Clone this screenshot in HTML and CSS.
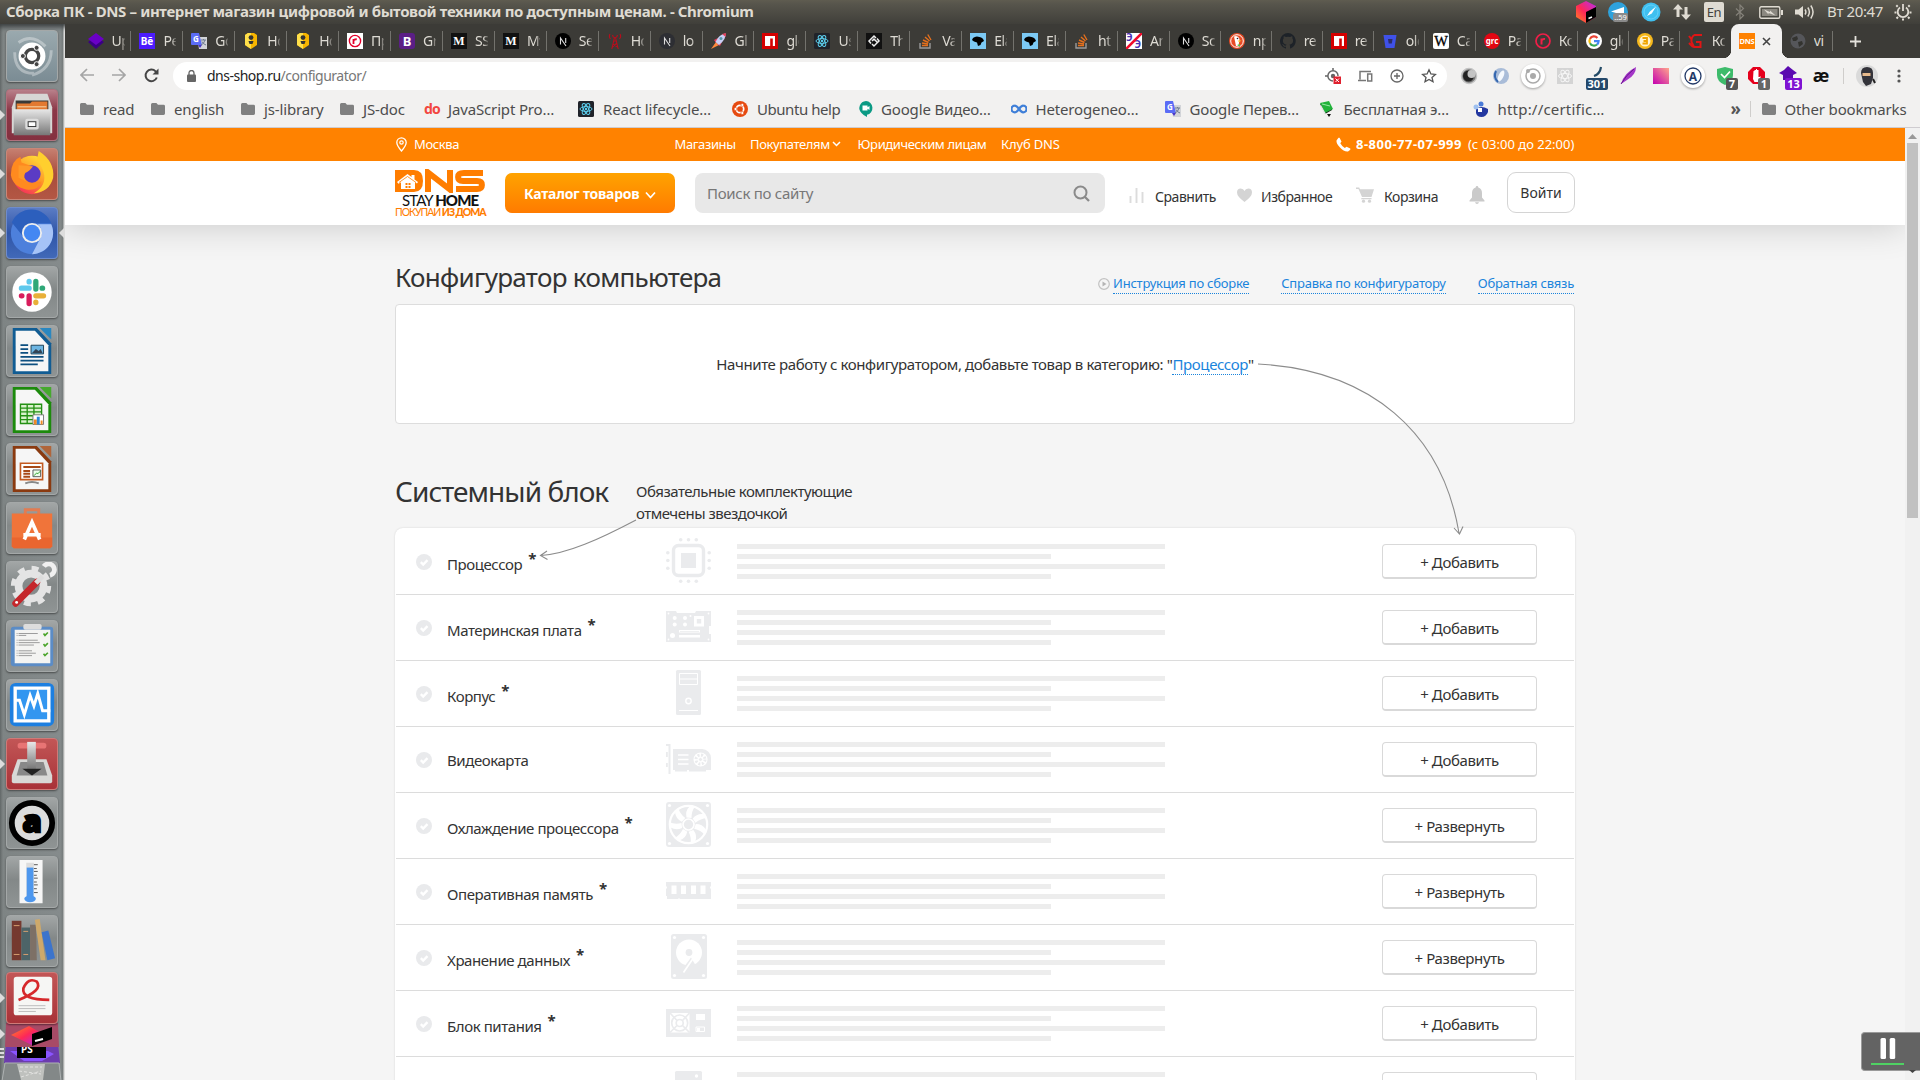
FILE: index.html
```html
<!DOCTYPE html>
<html lang="ru">
<head>
<meta charset="utf-8">
<title>Сборка ПК - DNS</title>
<link rel="stylesheet" href="styles.css">
</head>
<body>
<svg class="defs" aria-hidden="true">
  <defs>
    <linearGradient id="g-slate" x1="0" y1="0" x2="0" y2="1"><stop offset="0" stop-color="#e8e8e8"/><stop offset="1" stop-color="#777"/></linearGradient>
    <linearGradient id="g-fox" x1="0.8" y1="0" x2="0.2" y2="1"><stop offset="0" stop-color="#ffe63c"/><stop offset=".5" stop-color="#ff9a28"/><stop offset="1" stop-color="#f5275f"/></linearGradient>
    <linearGradient id="g-jb" x1="0" y1="0" x2="1" y2="1"><stop offset="0" stop-color="#ff8a1e"/><stop offset=".5" stop-color="#fe2857"/><stop offset="1" stop-color="#a42df5"/></linearGradient>
    <linearGradient id="g-cube" x1="0" y1="1" x2="1" y2="0"><stop offset="0" stop-color="#ff8a1e"/><stop offset=".45" stop-color="#fe2857"/><stop offset="1" stop-color="#b62df5"/></linearGradient>
    <linearGradient id="g-pink" x1="0" y1="1" x2="1" y2="0"><stop offset="0" stop-color="#c400b0"/><stop offset="1" stop-color="#ffa58c"/></linearGradient>
  </defs>
</svg>
<svg class="sprite" aria-hidden="true">
  <symbol id="folder" viewBox="0 0 14 12"><path fill="#808080" d="M0 1.5Q0 0 1.4 0H5.4L7 1.8H12.6Q14 1.8 14 3.2V10.6Q14 12 12.6 12H1.4Q0 12 0 10.6Z"/></symbol>
  <symbol id="t-layers" viewBox="0 0 16 16"><path fill="#3b0085" d="M0 9 8 3.5 16 9 8 16Z"/><path fill="#6a00c8" d="M0 6 8 0 16 6 8 12Z"/></symbol>
  <symbol id="t-be" viewBox="0 0 16 16"><path fill="#4c1bff" d="M0 0h16v16H0z"/><text x="8" y="11.6" text-anchor="middle" font-size="10" font-weight="700" fill="#fff">Bē</text></symbol>
  <symbol id="t-translate" viewBox="0 0 16 16"><path fill="#d2d4d8" d="M6 4h10v12H8z"/><path fill="#5b6cf6" d="M1 0h7l3 12H1Q0 12 0 11V1Q0 0 1 0z"/><path fill="#4a36c8" d="M7 12h4l-2 3z"/><text x="2" y="9" font-size="8" font-weight="700" fill="#fff">G</text><path d="M10 7h5M12.5 6v1M14 7q-1 4-4 5M11 8.500q1 2.500 4 3.500" stroke="#6d7a90" fill="none"/></symbol>
  <symbol id="t-badge" viewBox="0 0 16 16"><path fill="#f7b500" d="M2 2 5 0H11L14 2V12L8 16 2 12Z"/><path fill="#ffdf4a" d="M2 2 5 0H8V16L2 12Z"/><circle cx="8" cy="4.600" r="2.400" fill="#333"/><path fill="#333" d="M5.500 8h5l-1 3h-3z"/></symbol>
  <symbol id="t-redr" viewBox="0 0 16 16"><path fill="#fff" d="M0 0h16v16H0z"/><circle cx="8" cy="8" r="5.600" fill="none" stroke="#e4002b" stroke-width="1.400"/><path d="M6.500 11V6M6.500 7.500Q7.500 6 9.800 6.300" stroke="#e4002b" stroke-width="1.800" fill="none"/></symbol>
  <symbol id="t-bootstrap" viewBox="0 0 16 16"><rect width="16" height="16" rx="3" fill="#5b1e86"/><text x="8" y="13" text-anchor="middle" font-size="13" font-weight="700" fill="#fff">B</text></symbol>
  <symbol id="t-medium" viewBox="0 0 16 16"><path fill="#111" d="M0 0h16v16H0z"/><text x="8" y="12.400" text-anchor="middle" font-size="12" font-weight="700" class="serif" fill="#fff">M</text></symbol>
  <symbol id="t-next" viewBox="0 0 16 16"><circle cx="8" cy="8" r="8" fill="#000"/><path d="M5.500 11.500V5L11 13M10.700 5v5" stroke="#ddd" stroke-width="1.100" fill="none"/></symbol>
  <symbol id="t-nextdim" viewBox="0 0 16 16"><circle cx="8" cy="8" r="8" fill="#2d2e33"/><path d="M5.500 11.500V5L11 13M10.700 5v5" stroke="#ddd" stroke-width="1.100" fill="none"/></symbol>
  <symbol id="t-tower" viewBox="0 0 16 16"><path d="M7.600 4 4.800 16M8.400 4l2.800 12M5.800 11 10.500 14M10 10 5.500 14M6.500 8h3M3 1Q1.500 3.500 3.500 6M13 1Q14.500 3.500 12.500 6M5.500 2 6.500 4.500M10.500 2 9.500 4.500" stroke="#b90d1c" stroke-width="1.100" fill="none"/></symbol>
  <symbol id="t-rocket" viewBox="0 0 16 16"><path fill="#ff8a3c" d="M0 16 5 9l3 3z"/><path fill="#e2405c" d="M3 7 7 5 5 10zM11 9 9 13 6 11z"/><path fill="#c9cff5" d="M14.500.500Q15.500 6 8 12L4.500 9Q8 1 14.500.500z"/><path fill="#e2405c" d="M15 0 14.700 4 11 1Z"/><circle cx="10" cy="5.500" r="1.500" fill="#59a"/></symbol>
  <symbol id="t-npm" viewBox="0 0 16 16"><path fill="#d40000" d="M0 0h16v16H0z"/><path fill="#fff" d="M3 3h10v10h-2.200V5.500H8.200V13H3z"/></symbol>
  <symbol id="t-react" viewBox="0 0 16 16"><rect width="16" height="16" rx="1.500" fill="#20232a"/><g fill="none" stroke="#5ccfee"><ellipse cx="8" cy="8" rx="6" ry="2.400"/><ellipse cx="8" cy="8" rx="6" ry="2.400" transform="rotate(60 8 8)"/><ellipse cx="8" cy="8" rx="6" ry="2.400" transform="rotate(120 8 8)"/></g><circle cx="8" cy="8" r="1.200" fill="#5ccfee"/></symbol>
  <symbol id="t-diamond" viewBox="0 0 16 16"><path fill="#111" d="M0 0h16v16H0z"/><path d="M5 10.500 3 8 8 3l2 2M11 5.500 13 8 8 13 6 11M6 8 8 6l3 3" stroke="#eee" stroke-width="1.500" fill="none"/></symbol>
  <symbol id="t-stack" viewBox="0 0 16 16"><path d="M2 10v5h10v-5" stroke="#9a9a9a" stroke-width="1.400" fill="none"/><path d="M4 12.500h6M4 10l6 1M5 7l5.500 2.500M7 4l4.500 4M9.800 1.500 13 7" stroke="#e6701d" stroke-width="1.400" fill="none"/></symbol>
  <symbol id="t-elastic" viewBox="0 0 16 16"><path fill="#7cc9f4" d="M0 0h16v16H0z"/><path fill="#000" d="M3 5Q6 2.500 9.500 4 13 4.500 14 8L11.500 9.500 10.500 12 8 13 7 9.500 4 8.500 2 7z"/></symbol>
  <symbol id="t-noe" viewBox="0 0 16 16"><path fill="#fff" d="M0 0h16v16H0z"/><text x="0" y="7.500" font-size="10" font-weight="700" fill="#4a2fb5">Э</text><text x="8.500" y="15" font-size="10" font-weight="700" fill="#4a2fb5">Э</text><path d="M0 16 16 0" stroke="#f10b2b" stroke-width="2.600"/></symbol>
  <symbol id="t-duck" viewBox="0 0 16 16"><circle cx="8" cy="8" r="8" fill="#e84a24"/><circle cx="8" cy="8" r="6.300" fill="#e84a24" stroke="#fff"/><path fill="#fff" d="M5 3.500Q9 2 10.500 6L9.500 13.500 7 13z"/><path fill="#fecb2e" d="M8.500 7.500h4L10 9.300z"/><circle cx="8.500" cy="5.500" r=".8" fill="#223"/><path fill="#56b949" d="M8 12l3-1v3z"/></symbol>
  <symbol id="t-github" viewBox="0 0 16 16"><path fill="#1d2228" d="M8 0a8 8 0 0 0-2.500 15.600c.4 0 .5-.2.500-.4v-1.500c-2.200.5-2.700-1-2.700-1-.4-.9-.9-1.200-.9-1.200-.7-.5.1-.5.100-.5.800.1 1.200.8 1.200.8.700 1.200 1.900.9 2.300.7.100-.5.300-.9.500-1.100-1.800-.2-3.600-.9-3.600-4 0-.9.300-1.600.8-2.100-.1-.2-.4-1 .1-2.100 0 0 .7-.2 2.200.8a7.500 7.500 0 0 1 4 0c1.500-1 2.200-.8 2.200-.8.400 1.100.2 1.900.1 2.100.5.500.8 1.200.8 2.100 0 3.100-1.900 3.800-3.700 4 .3.300.600.700.600 1.500v2.200c0 .2.100.5.500.4A8 8 0 0 0 8 0z"/></symbol>
  <symbol id="t-bit" viewBox="0 0 16 16"><path fill="#3f51e8" d="M1.500 2h13L12.500 15h-9z"/><path fill="#2b2d6b" d="M6 6h4.500l-.7 4.500H6.700z"/></symbol>
  <symbol id="t-wiki" viewBox="0 0 16 16"><rect width="16" height="16" rx="2" fill="#fff"/><text x="8" y="12.800" text-anchor="middle" font-size="14.500" class="serif" fill="#000" stroke="#000" stroke-width=".3">W</text></symbol>
  <symbol id="t-grc" viewBox="0 0 16 16"><circle cx="8" cy="8" r="8" fill="#e20613"/><text x="8" y="10.500" text-anchor="middle" font-size="8" font-weight="700" fill="#fff">grc</text></symbol>
  <symbol id="t-ring" viewBox="0 0 16 16"><circle cx="8" cy="8" r="7" fill="none" stroke="#f01e48" stroke-width="1.700"/><path d="M6.500 11.500V5.500M6.500 7.500Q7.500 5.500 10 6" stroke="#f01e48" stroke-width="2" fill="none"/></symbol>
  <symbol id="t-google" viewBox="0 0 16 16"><circle cx="8" cy="8" r="8" fill="#fff"/><g fill="none" stroke-width="2.200"><path stroke="#ea4335" d="M3.900 5.900A4.600 4.600 0 0 1 11.400 4.900"/><path stroke="#fbbc05" d="M3.900 5.900A4.600 4.600 0 0 0 4 10.200"/><path stroke="#34a853" d="M4 10.200A4.600 4.600 0 0 0 11 11.500"/><path stroke="#4285f4" d="M11 11.500A4.600 4.600 0 0 0 12.600 8.200H8"/></g></symbol>
  <symbol id="t-coin" viewBox="0 0 16 16"><circle cx="8" cy="8" r="8" fill="#f6b81c"/><circle cx="8" cy="8" r="5.500" fill="#fff3cf"/><path d="M5.500 5h4.500v5.500H5.500M6.500 8h4" stroke="#f0a400" stroke-width="1.800" fill="none"/></symbol>
  <symbol id="t-g" viewBox="0 0 16 16"><path d="M14 2H6.500Q3 4 3.500 9L6 14h6.500V9H8M1 3l3 4M1 10l4 4" stroke="#e01515" stroke-width="2" fill="none"/></symbol>
  <symbol id="t-dns" viewBox="0 0 16 16"><path fill="#ff8200" d="M0 0h16v16H0z"/><text x="8" y="10.800" text-anchor="middle" font-size="7.500" font-weight="700" letter-spacing="-.3" fill="#fff">DNS</text></symbol>
  <symbol id="t-globe" viewBox="0 0 16 16"><circle cx="8" cy="8" r="7.500" fill="#55565a"/><path fill="#33332f" d="M2 5l5-2 1 3-2 2-3 0zM8 9l4-1 1 3-4 3z"/></symbol>

  <symbol id="check" viewBox="0 0 16 16"><circle cx="8" cy="8" r="8" fill="#e9eaec"/><path d="M4.800 8.200 7.200 10.500 11.500 6.200" stroke="#fff" stroke-width="2.400" fill="none"/></symbol>
  <symbol id="p-cpu" viewBox="0 0 45 45"><rect x="7.500" y="7.500" width="30" height="30" rx="5" fill="none" stroke="#eaebed" stroke-width="3.400"/><path fill="#eaebed" d="M15 15h15v15H15z"/><g fill="#eaebed"><circle cx="14.700" cy="1.800" r="1.800"/><circle cx="22.500" cy="1.800" r="1.800"/><circle cx="30.300" cy="1.800" r="1.800"/><circle cx="14.700" cy="43.200" r="1.800"/><circle cx="22.500" cy="43.200" r="1.800"/><circle cx="30.300" cy="43.200" r="1.800"/><circle cx="1.800" cy="14.700" r="1.800"/><circle cx="1.800" cy="22.500" r="1.800"/><circle cx="1.800" cy="30.300" r="1.800"/><circle cx="43.200" cy="14.700" r="1.800"/><circle cx="43.200" cy="22.500" r="1.800"/><circle cx="43.200" cy="30.300" r="1.800"/></g></symbol>
  <symbol id="p-board" viewBox="0 0 45 45"><path fill="#eaebed" d="M0 7h10l1 2h18l1-2h15v15h-2v8h2v8H0z"/><g fill="#fff"><circle cx="8.700" cy="14" r="2"/><circle cx="8.700" cy="20.500" r="2"/><circle cx="19" cy="14" r="2"/><circle cx="19" cy="20.500" r="2"/><circle cx="24.500" cy="12" r="1"/><path d="M28 12h10v10.500H28z"/><circle cx="6.500" cy="31.500" r="2.500"/><path d="M13 26h21v2.600H13zM13 31h21v2.600H13z"/><circle cx="2.500" cy="9.500" r=".9"/><circle cx="42.500" cy="9.500" r=".9"/><circle cx="2.500" cy="35.500" r=".9"/><circle cx="42.500" cy="35.500" r=".9"/></g><path fill="#eaebed" d="M30.800 15h4.400v4.500h-4.400zM14 27h19v.700H14z"/></symbol>
  <symbol id="p-case" viewBox="0 0 45 45"><rect x="10" width="25" height="45" rx="1.500" fill="#eaebed"/><g fill="none" stroke="#fff"><path d="M13.500 3.500h18v11h-18zM13.500 9h18M13 40.500h19"/><circle cx="22.500" cy="31" r="2.700" stroke-width="1.400"/></g></symbol>
  <symbol id="p-gpu" viewBox="0 0 45 45"><path fill="#eaebed" d="M0 8h4.500v30H2.500V10H0zM0 16h1.800v5H0zM0 27h1.800v4H0zM7 13h29a9 9 0 0 1 9 9v12h-5v1.500H23V34h-2v1.500H9V34H7z"/><path d="M12 19h10.500M12 23.500h10.500M12 28h10.500" stroke="#fff" stroke-width="1.500"/><circle cx="34.500" cy="23.500" r="7" fill="#fff"/><circle cx="34.500" cy="23.500" r="4.500" fill="none" stroke="#eaebed" stroke-width="3" stroke-dasharray="2 1.530"/><circle cx="34.500" cy="23.500" r="2" fill="#eaebed" stroke="#fff"/></symbol>
  <symbol id="p-fan" viewBox="0 0 45 45"><rect width="45" height="45" rx="3" fill="#eaebed"/><g fill="#fff"><circle cx="3.500" cy="3.500" r="1.600"/><circle cx="41.500" cy="3.500" r="1.600"/><circle cx="3.500" cy="41.500" r="1.600"/><circle cx="41.500" cy="41.500" r="1.600"/></g><circle cx="22.500" cy="22.500" r="18.700" fill="none" stroke="#fff" stroke-width="2.200"/><g fill="#fff"><path id="blade" d="M20.500 15.500Q19 9 23.500 4.500H29Q25.500 9 25.500 16Z"/><use href="#blade" transform="rotate(51.400 22.500 22.500)"/><use href="#blade" transform="rotate(102.800 22.500 22.500)"/><use href="#blade" transform="rotate(154.200 22.500 22.500)"/><use href="#blade" transform="rotate(205.700 22.500 22.500)"/><use href="#blade" transform="rotate(257.100 22.500 22.500)"/><use href="#blade" transform="rotate(308.500 22.500 22.500)"/></g><circle cx="22.500" cy="22.500" r="6.500" fill="#eaebed"/><circle cx="22.500" cy="22.500" r="5.500" fill="#eaebed" stroke="#fff" stroke-width="1.700"/></symbol>
  <symbol id="p-ram" viewBox="0 0 45 45"><path fill="#eaebed" d="M0 14h45v4q-2 1.500 0 3v10H14l-1-1-1 1H1v-3H0v-7q2-1.500 0-3z"/><path fill="#fff" d="M5.500 17.500h5v8.500h-5zM15 17.500h5v8.500h-5zM25 17.500h5v8.500h-5zM34.500 17.500h5v8.500h-5z"/></symbol>
  <symbol id="p-hdd" viewBox="0 0 45 45"><rect x="5" width="36" height="45" rx="2.500" fill="#eaebed"/><g fill="#fff"><circle cx="8.500" cy="3.500" r="1.600"/><circle cx="37.500" cy="3.500" r="1.600"/><circle cx="8.500" cy="41.500" r="1.600"/><circle cx="37.500" cy="41.500" r="1.600"/><circle cx="23" cy="18.500" r="13"/></g><path fill="#eaebed" d="M18 33 25 23.500 30 32z"/><path d="M17.500 38.500 27 24.500" stroke="#fff" stroke-width="1.700"/><circle cx="23" cy="18.500" r="3.400" fill="#eaebed"/></symbol>
  <symbol id="p-psu" viewBox="0 0 45 45"><path fill="#eaebed" d="M0 9h45v28H0z"/><path fill="#fff" d="M4 13h19.500v19.500H4zM30 14h9v6h-9z"/><g fill="none" stroke="#eaebed" stroke-width="1.700"><circle cx="13.700" cy="23" r="3.500"/><circle cx="13.700" cy="23" r="8"/><path d="M4 13l7 7.500M23.500 13l-7 7.500M4 32.500l7-7M23.500 32.500l-7-7"/></g><path d="M30 27h8.500v4.500H30z" fill="none" stroke="#fff"/><path fill="#fff" d="M31 28h3v3h-3z"/></symbol>
  <symbol id="p-reader" viewBox="0 0 45 45"><rect x="9" y="5" width="27" height="45" rx="1.500" fill="#eaebed"/><circle cx="30.500" cy="10" r="1.700" fill="#fff"/></symbol>
</svg>

<header class="panel">
  <span class="panel-title">Сборка ПК - DNS – интернет магазин цифровой и бытовой техники по доступным ценам. - Chromium</span>
  <div class="tray">
    <svg width="20" height="22" viewBox="0 0 20 22"><path fill="url(#g-cube)" d="M10 0 20 5v11l-10 6L0 16V5z"/><path fill="#000" d="M10 11 20 6v10l-10 6z"/><path d="M12.500 17.500l3.500-1.500" stroke="#fff" stroke-width="1.500"/></svg>
    <svg width="20" height="20" viewBox="0 0 20 20"><circle cx="10" cy="10" r="10" fill="#2ea2dc"/><path fill="#fff" d="M3 9.500 16 5v7L8 11z"/><rect x="5" y="11" width="15" height="9" rx="2" fill="#8a8a8a"/><text x="12.500" y="18" text-anchor="middle" font-size="7.500" fill="#fff">..59</text></svg>
    <svg width="20" height="20" viewBox="0 0 20 20"><circle cx="10" cy="10" r="9.500" fill="#3fc0f0"/><circle cx="10" cy="10" r="7" fill="none" stroke="#65d2fa"/><path fill="#fff" d="M15 4.500 10.800 11.500 8.700 9.800zM10.800 11.500 8.700 9.800 6 14z"/></svg>
    <svg width="18" height="18" viewBox="0 0 18 18"><path fill="#dfdbd2" d="M5 1 10 6.500H6.500V14h-3V6.500H0zM13 17 8 11.500h3.500V4h3v7.500H18z"/></svg>
    <span class="lang">En</span>
    <svg width="10" height="16" viewBox="0 0 10 16"><path d="M1 4.500 8.500 11.500 5 15V1l3.500 3.500L1 11.500" fill="none" stroke="#85827a" stroke-width="1.200"/></svg>
    <svg width="24" height="13" viewBox="0 0 24 13"><rect x=".8" y=".8" width="20" height="11.400" rx="1.500" fill="none" stroke="#dfdbd2" stroke-width="1.400"/><path fill="#8b8880" d="M3 3h15.500v7H3z"/><path fill="#dfdbd2" d="M22 4h2v5h-2zM5 3.500l6 2.500V4.500l5.500 5-7-2.500v1.500z"/></svg>
    <svg width="20" height="16" viewBox="0 0 20 16"><path fill="#dfdbd2" d="M0 5.500h3.500L8 2v12L3.500 10.500H0z"/><path d="M10 5.500q1.800 2.500 0 5M12.800 3.500q3.200 4.500 0 9M15.800 1.500q4.500 6.500 0 13" fill="none" stroke="#dfdbd2" stroke-width="1.500"/></svg>
    <span class="clock">Вт 20:47</span>
    <svg width="18" height="18" viewBox="0 0 18 18"><path d="M6 4.500a5.300 5.300 0 1 0 6 0M9 1v7" fill="none" stroke="#dfdbd2" stroke-width="1.800"/><path d="M3.700 3.700 2.300 2.300M2.500 9.500H.5M17.500 9.500h-2M4 14l-1.500 1.500M9 15.500v2M14 14l1.500 1.500M14.300 3.700l1.400-1.400" stroke="#dfdbd2" stroke-width="2"/></svg>
  </div>
</header>

<div class="desktop">
  <nav class="launcher">
    <div class="app slate"><svg viewBox="0 0 52 52"><path d="M12 12Q26 2 40 16M46 20Q46 40 26 46M8 22Q8 44 28 44" fill="none" stroke="#fff" stroke-opacity=".35" stroke-width="3"/><circle cx="26" cy="26" r="14" fill="#fff"/><circle cx="26" cy="26" r="7" fill="none" stroke="#444" stroke-width="3.400"/><g fill="#444" stroke="#fff"><circle cx="16.500" cy="26" r="2.600"/><circle cx="30.800" cy="17.500" r="2.600"/><circle cx="30.800" cy="34.500" r="2.600"/></g></svg></div>
    <div class="app wine run"><svg viewBox="0 0 52 52"><path fill="#d7d7d5" d="M10 4h32l5 14v27H5V18z"/><path fill="#3a3a38" d="M9 11h34v10H9z"/><path fill="#e27930" d="M10 14h14l2-2h16v9H10z"/><path stroke="#f8dcb0" d="M11 17.500h30"/><path fill="url(#g-slate)" d="M7 20h38v27H7z"/><rect x="19" y="30" width="14" height="11" rx="2" fill="#ddd"/><rect x="22" y="33" width="8" height="5" fill="#fff" stroke="#333"/></svg></div>
    <div class="app brick run"><svg viewBox="0 0 52 52"><circle cx="26" cy="27" r="20" fill="url(#g-fox)"/><path fill="#ffcf2e" d="M33 2Q50 13 48 30 44 45 28 46 42 38 38 24 35 15 31 12z"/><path fill="#ff8a1f" d="M4 27Q4 12 14 8L15 14 26 18 21 24Q17 30 24 35L36 34Q32 44 20 42 6 39 4 27z"/><circle cx="26" cy="26" r="9" fill="#5b3bc4"/><path fill="#ff9a28" d="M12 17 27 18Q24 23 19 25 16 30 21 34L12 30z"/></svg></div>
    <div class="app navy run focus"><svg viewBox="0 0 52 52"><circle cx="26" cy="26" r="22" fill="#4d80dc"/><path fill="#2c5fbd" d="M5 15A22 22 0 0 1 46 16H26L17 30z"/><path fill="#a6c3f7" d="M46 17A22 22 0 0 1 26 48L35 31Q38 21 32 17z"/><circle cx="26" cy="26" r="10.500" fill="#eee"/><circle cx="26" cy="26" r="8.500" fill="#4487f2"/></svg></div>
    <div class="app"><svg viewBox="0 0 52 52"><circle cx="26" cy="26" r="20.500" fill="#fff"/><g stroke-linecap="round" stroke-width="5.500"><path stroke="#5ec8ec" d="M15 22h8M23 15v.5"/><path stroke="#2fa878" d="M30 15v8M37 22h-.5"/><path stroke="#e8b03a" d="M30 30h8M30 37v-.5"/><path stroke="#d81d5c" d="M23 30v8M15 30h.5"/></g></svg></div>
    <div class="app"><svg viewBox="0 0 52 52"><path fill="#115c93" d="M6 2h25l15 16v32H6z"/><path fill="#2a87c0" d="M34 2h12v12z"/><path fill="#f6f6f6" d="M9 5h20l14 15v27H9z"/><path d="M14 20h8M14 24h8M14 28h8M14 32h24M14 36h24M14 40h18" stroke="#0d4f80" stroke-width="1.800"/><path fill="#6cb5e2" stroke="#1c4156" d="M25 20h13v9H25z"/><path fill="#345" d="M26 28l4-4 3 2 2-2 2 4z"/></svg></div>
    <div class="app"><svg viewBox="0 0 52 52"><path fill="#1c8a0c" d="M6 2h25l15 16v32H6z"/><path fill="#46a92e" d="M34 2h12v12z"/><path fill="#f6f6f6" d="M9 5h20l14 15v27H9z"/><path fill="#d9f2cc" stroke="#239013" stroke-width="1.400" d="M14 20h22v20H14zM14 24h22M14 28h22M14 32h22M14 36h22M21 20v20M28 20v20"/><path fill="#fff" stroke="#777" d="M27 31h11v10H27z"/><path fill="#f08a24" d="M28 36h3v5h-3zM35 37h2v4h-2z"/><path fill="#2a86d8" d="M31 33h3v8h-3z"/></svg></div>
    <div class="app"><svg viewBox="0 0 52 52"><path fill="#8a3a10" d="M6 2h25l15 16v32H6z"/><path fill="#b0653a" d="M34 2h12v12z"/><path fill="#f6f6f6" d="M9 5h20l14 15v27H9z"/><path fill="#fff" stroke="#c45a20" stroke-width="1.700" d="M14 20h23v17H14z"/><path d="M17 24h18M17 28h7M17 31h7M17 34h7" stroke="#a84a18" stroke-width="2"/><path fill="#eaffea" stroke="#555" d="M27 27h8v7h-8z"/><path d="M28 33l3-3 1 1 3-3" fill="none" stroke="#2b9a2b"/><path d="M19 41q7-3 14 0" fill="none" stroke="#888" stroke-width="2"/></svg></div>
    <div class="app"><svg viewBox="0 0 52 52"><path d="M19 14V7h14v7" fill="none" stroke="#e27c52" stroke-width="3"/><path fill="#f0743a" d="M5 11h42v34l-2 2H7l-2-2z"/><path fill="#e9652f" d="M5 36h42v9l-2 2H7l-2-2z"/><path d="M18 38 26 20l8 18M17 33h18" fill="none" stroke="#fff" stroke-width="3.800"/></svg></div>
    <div class="app"><svg viewBox="0 0 52 52"><circle cx="25" cy="25" r="13" fill="none" stroke="#e4e4e4" stroke-width="8"/><circle cx="25" cy="25" r="18" fill="none" stroke="#e4e4e4" stroke-width="6" stroke-dasharray="7 7.140"/><path d="M9 43 31 21" stroke="#c5262b" stroke-width="7" stroke-linecap="round"/><path d="M30 22l7-7" stroke="#ddd" stroke-width="5"/><path d="M33 13a6 6 0 1 0 11 2" fill="none" stroke="#f0f0f0" stroke-width="5" transform="rotate(-135 39 11)"/><circle cx="10" cy="42" r="1.500" fill="#fff"/></svg></div>
    <div class="app"><svg viewBox="0 0 52 52"><rect x="4" y="6" width="44" height="41" rx="3" fill="#5b8cc6"/><path fill="#f4f4f2" d="M8 9h37v35H8z"/><rect x="17" y="3" width="19" height="6" rx="2" fill="#ddd"/><path d="M10 13h22M10 15h10M10 20h22M10 22.500h24M10 25h18M10 31h16M10 33.500h20M10 36h16" stroke="#999" stroke-dasharray="1 1 40 0"/><path d="M38 13l1.500 2 3-3M38 24l1.500 2 3-3M38 34l1.500 2 3-3" fill="none" stroke="#4aa52a" stroke-width="1.700"/></svg></div>
    <div class="app"><svg viewBox="0 0 52 52"><rect x="3" y="3" width="46" height="45" rx="6" fill="#1d7fe0"/><path fill="#3296f0" stroke="#fff" stroke-width="3.500" d="M8.500 8.500h35v34h-35z"/><path d="M9 21h4l5 15 6-20 4 11 4-13 5 18h8" fill="none" stroke="#fff" stroke-width="3"/></svg></div>
    <div class="app red run"><svg viewBox="0 0 52 52"><rect x="11" y="4" width="30" height="6" rx="3" fill="#e87474"/><path fill="#d8d8d6" d="M11 21h30l6 17v6q0 2-2 2H7q-2 0-2-2v-6z"/><path fill="#888" d="M14 24h24l4 14H10z"/><path fill="url(#g-slate)" d="M21 3h9v28h-9z"/><path fill="#222" d="M16 31h20L26 38z"/></svg></div>
    <div class="app"><svg viewBox="0 0 52 52"><circle cx="26" cy="26" r="21" fill="#dcdcdc" stroke="#000" stroke-width="6"/><text x="26" y="35" text-anchor="middle" font-size="32" font-weight="900" fill="#000" stroke="#000" stroke-width="2.500">a</text></svg></div>
    <div class="app"><svg viewBox="0 0 52 52"><path fill="#f6f6f6" d="M13 3h24v45H13z"/><path d="M24 6v35" stroke="#ddd" stroke-width="8"/><path d="M24 11v31" stroke="#4d97ee" stroke-width="7"/><ellipse cx="24" cy="43.500" rx="6" ry="3.500" fill="#4d97ee"/><path d="M28 8h4M28 12h3M28 15h4M28 19h3M28 22h4M28 26h3M28 29h4M28 33h3M28 37h4" stroke="#555"/></svg></div>
    <div class="app"><svg viewBox="0 0 52 52"><path fill="#75392f" d="M5 5h10v41H5z"/><path fill="#4d6468" d="M15 12h9v34h-9z"/><path fill="#7d7066" d="M24 9h6l1 37h-7z"/><path fill="#cfa96a" d="M29 4l5-1 6 43h-5z"/><path fill="#3c74cc" d="M36 17l7-2 7 29-8 2z"/><path d="M7 10h6M7 40h6M17 16h5M17 40h5" stroke="#d8a070"/></svg></div>
    <div class="app red run doc"><svg viewBox="0 0 52 52"><rect x="7" y="4" width="40" height="40" rx="3" fill="#f6f6f4"/><path d="M12 28Q38 18 31 9 22 4 17 16 15 28 44 28" fill="none" stroke="#d6282b" stroke-width="2.800"/><path d="M12 34h28M12 37h28M12 40h18" stroke="#bbb"/></svg></div>
    <div class="stack">
      <svg viewBox="0 0 64 57" width="64" height="57"><path fill="#6c3cae" d="M6 20h52l2 20H4z"/><path fill="#8a54ff" d="M10 28h38l6 3-12 7H24z"/><path fill="#000" d="M17 23h29v12H17z"/><text x="21" y="30" font-size="10" font-weight="700" fill="#fff">PS</text><path fill="#a84a66" d="M6 0h52l1 24H5z"/><path fill="url(#g-jb)" d="M11 12 29 3l12 7-9 12z"/><path fill="#000" d="M32 11 52 4v12l-20 7z"/><path d="M35 18l8-2" stroke="#fff" stroke-width="2"/><path fill="#838888" stroke="#aeb2b2" d="M5 40h54l2 18H2z"/><path fill="#bfc1be" d="M17 41h28l-2 16H21z"/><path d="M20 44h22M19 48l22 3M21 54l20-6" stroke="#e2e2e0" stroke-dasharray="3 2"/><path fill="#ddd" d="M0 6 5 11 0 16zM0 25h4v2H0zM0 29h4v2H0zM0 33h4v2H0z"/></svg>
    </div>
  </nav>

  <div class="browser">
    <div class="tabs">
      <div class="tab"><svg><use href="#t-layers"/></svg><span>Upw</span></div>
      <div class="tab"><svg><use href="#t-be"/></svg><span>Per</span></div>
      <div class="tab"><svg><use href="#t-translate"/></svg><span>Goo</span></div>
      <div class="tab"><svg><use href="#t-badge"/></svg><span>Но</span></div>
      <div class="tab"><svg><use href="#t-badge"/></svg><span>Но</span></div>
      <div class="tab"><svg><use href="#t-redr"/></svg><span>Про</span></div>
      <div class="tab"><svg><use href="#t-bootstrap"/></svg><span>Grid</span></div>
      <div class="tab"><svg><use href="#t-medium"/></svg><span>SSR</span></div>
      <div class="tab"><svg><use href="#t-medium"/></svg><span>My</span></div>
      <div class="tab"><svg><use href="#t-next"/></svg><span>Ser</span></div>
      <div class="tab"><svg><use href="#t-tower"/></svg><span>Но</span></div>
      <div class="tab"><svg><use href="#t-nextdim"/></svg><span>lo</span></div>
      <div class="tab"><svg><use href="#t-rocket"/></svg><span>Glo</span></div>
      <div class="tab"><svg><use href="#t-npm"/></svg><span>glo</span></div>
      <div class="tab"><svg><use href="#t-react"/></svg><span>Usi</span></div>
      <div class="tab"><svg><use href="#t-diamond"/></svg><span>The</span></div>
      <div class="tab"><svg><use href="#t-stack"/></svg><span>Var</span></div>
      <div class="tab"><svg><use href="#t-elastic"/></svg><span>Ela</span></div>
      <div class="tab"><svg><use href="#t-elastic"/></svg><span>Ela</span></div>
      <div class="tab"><svg><use href="#t-stack"/></svg><span>htm</span></div>
      <div class="tab"><svg><use href="#t-noe"/></svg><span>An</span></div>
      <div class="tab narrow"><svg><use href="#t-next"/></svg><span>Sco</span></div>
      <div class="tab narrow"><svg><use href="#t-duck"/></svg><span>npm</span></div>
      <div class="tab narrow"><svg><use href="#t-github"/></svg><span>rea</span></div>
      <div class="tab narrow"><svg><use href="#t-npm"/></svg><span>rea</span></div>
      <div class="tab narrow"><svg><use href="#t-bit"/></svg><span>old</span></div>
      <div class="tab narrow"><svg><use href="#t-wiki"/></svg><span>Car</span></div>
      <div class="tab narrow"><svg><use href="#t-grc"/></svg><span>Pac</span></div>
      <div class="tab narrow"><svg><use href="#t-ring"/></svg><span>Ко</span></div>
      <div class="tab narrow"><svg><use href="#t-google"/></svg><span>glo</span></div>
      <div class="tab narrow"><svg><use href="#t-coin"/></svg><span>Pac</span></div>
      <div class="tab narrow last"><svg><use href="#t-g"/></svg><span>Ко</span></div>
      <div class="tab narrow active"><svg><use href="#t-dns"/></svg><svg class="close" viewBox="0 0 9 9"><path d="M1 1l7 7M8 1 1 8" stroke="#444" stroke-width="1.600"/></svg></div>
      <div class="tab narrow"><svg><use href="#t-globe"/></svg><span>vi</span></div>
      <svg class="plus" viewBox="0 0 13 13"><path d="M6.500 1v11M1 6.500h11" stroke="#e4e2dc" stroke-width="1.800"/></svg>
    </div>

    <div class="toolbar">
      <div class="nav-buttons">
        <svg width="14" height="14" viewBox="0 0 14 14"><path d="M7 1 1 7l6 6M1 7h13" fill="none" stroke="#a5a5a5" stroke-width="1.700"/></svg>
        <svg width="14" height="14" viewBox="0 0 14 14"><path d="M7 1l6 6-6 6M13 7H0" fill="none" stroke="#a5a5a5" stroke-width="1.700"/></svg>
        <svg width="15" height="15" viewBox="0 0 15 15"><path d="M12.800 9.500A5.800 5.800 0 1 1 11.600 3.400L13 5" fill="none" stroke="#454545" stroke-width="2"/><path fill="#454545" d="M14.500.500V6.500H8.500z"/></svg>
      </div>
      <div class="omnibox">
        <svg width="9" height="12" viewBox="0 0 9 12"><rect y="4.500" width="9" height="7.500" rx="1" fill="#666"/><path d="M2 5V3a2.500 2.500 0 0 1 5 0v2" fill="none" stroke="#666" stroke-width="1.300"/></svg>
        <span class="url"><b>dns-shop.ru</b>/configurator/</span>
        <div class="omni-actions">
          <svg width="16" height="16" viewBox="0 0 16 16"><path d="M8 2.800A5 5 0 1 0 8 13M8 2.800A5 5 0 0 1 13 8M8 0v3M0 8h3" fill="none" stroke="#666" stroke-width="1.500"/><circle cx="8" cy="8" r="2.200" fill="#666"/><path fill="#e0202e" d="M8.500 8.500H16V16H8.500z"/><path d="M10.500 10.500l3.500 3.500M14 10.500 10.500 14" stroke="#fff"/></svg>
          <svg width="16" height="16" viewBox="0 0 16 16"><path d="M3 11.500V3.500h11M1 12.500h8M10.700 6h4v7h-4z" fill="none" stroke="#777" stroke-width="1.500"/></svg>
          <svg width="16" height="16" viewBox="0 0 16 16"><circle cx="8" cy="8" r="6" fill="none" stroke="#666" stroke-width="1.300"/><path d="M8 5v6M5 8h6" stroke="#666" stroke-width="1.300"/></svg>
          <svg width="16" height="16" viewBox="0 0 16 16"><path d="M8 1.800l1.900 4.100 4.500.5L11 9.400l1 4.400L8 11.500l-4 2.300 1-4.400L1.600 6.400l4.500-.5z" fill="none" stroke="#555" stroke-width="1.300"/></svg>
        </div>
      </div>
      <div class="extensions">
        <svg viewBox="0 0 26 26"><circle cx="13" cy="13" r="7.500" fill="#777" stroke="#c4c4c4" stroke-width="1.500"/><circle cx="12.500" cy="13" r="5.500" fill="#222"/><circle cx="15.500" cy="11" r="4" fill="#c4c4c4"/></svg>
        <svg viewBox="0 0 26 26"><circle cx="13" cy="13" r="8" fill="#a9bcd8"/><ellipse cx="13" cy="13" rx="2.500" ry="6" fill="#f4f8fd" transform="rotate(25 13 13)"/><path d="M8 8q-3 6 2 11" fill="none" stroke="#3668b0" stroke-width="2"/></svg>
        <svg viewBox="0 0 26 26"><circle class="disc" cx="13" cy="13" r="12" fill="#fff"/><circle cx="13" cy="13" r="7" fill="none" stroke="#aaa" stroke-width="1.500"/><circle cx="13" cy="13" r="3" fill="#aaa"/><circle cx="8" cy="8" r="2" fill="#aaa"/></svg>
        <svg viewBox="0 0 26 26"><path fill="#d4d4d4" d="M5 5h16v16H5z"/><g fill="none" stroke="#f6f6f6"><ellipse cx="13" cy="13" rx="6.500" ry="2.500"/><ellipse cx="13" cy="13" rx="6.500" ry="2.500" transform="rotate(60 13 13)"/><ellipse cx="13" cy="13" rx="6.500" ry="2.500" transform="rotate(120 13 13)"/></g></svg>
        <svg viewBox="0 0 26 26"><path d="M17 4q-1 7-7 9" fill="none" stroke="#234a66" stroke-width="2.200"/><rect x="2" y="15" width="22" height="12" rx="2" fill="#24486a"/><text x="13" y="25" text-anchor="middle" font-size="11" font-weight="700" fill="#fff">301</text></svg>
        <svg viewBox="0 0 26 26"><path fill="#a436c8" d="M5 21Q8 10 20 4 20 12 11 17z"/><path d="M5 21Q10 12 18 6" fill="none" stroke="#6a1690"/></svg>
        <svg viewBox="0 0 26 26"><path fill="url(#g-pink)" d="M5 5h16v16H5z"/></svg>
        <svg viewBox="0 0 26 26"><circle class="disc" cx="13" cy="13" r="12" fill="#fff"/><circle cx="13" cy="13" r="8" fill="none" stroke="#233a68" stroke-width="1.300"/><text x="13" y="17.500" text-anchor="middle" font-size="12" font-weight="700" fill="#233a68">A</text></svg>
        <svg viewBox="0 0 26 26"><path fill="#3dbb6b" d="M5 6 13 4l8 2v6q0 7-8 10-8-3-8-10z"/><path d="M9 11l3.500 3.500L18 8.500" fill="none" stroke="#fff" stroke-width="1.700"/><rect x="14" y="15" width="12" height="12" rx="2" fill="#555"/><text x="20" y="25" text-anchor="middle" font-size="11" font-weight="700" fill="#fff">7</text></svg>
        <svg viewBox="0 0 26 26"><path fill="#e5001c" d="M9 4h7l5 5v7l-5 5H9l-5-5V9z"/><path fill="#fff" d="M9.500 8h1v-1h1.500V6H13v1h1.500v7h1l1-1v2l-2 4h-4l-1.500-3z"/><rect x="14" y="15" width="12" height="12" rx="2" fill="#666"/><text x="20" y="25" text-anchor="middle" font-size="11" font-weight="700" fill="#fff">1</text></svg>
        <svg viewBox="0 0 26 26"><path fill="#5b0ab0" d="M12 3l5 4 4 3-4 2v5H7v-5l-4-2 5-3z"/><rect x="9" y="15" width="17" height="12" rx="2" fill="#7f12d2"/><text x="17.500" y="25" text-anchor="middle" font-size="11" font-weight="700" fill="#fff">13</text></svg>
        <svg viewBox="0 0 26 26"><text x="13" y="18.500" text-anchor="middle" font-size="18" font-weight="700" fill="#111">æ</text></svg>
      </div>
      <i class="divider"></i>
      <svg class="avatar" viewBox="0 0 22 22"><circle cx="11" cy="11" r="11" fill="#dadada"/><path fill="#33333a" d="M5 8q0-6 6-6t6 6v5l-2 6-5 2-3-4z"/><path fill="#e6b98c" d="M6.500 8h8v3h-8z"/><path d="M17 14l2 4" stroke="#222" stroke-width="2"/></svg>
      <svg class="kebab" viewBox="0 0 4 14"><g fill="#555"><circle cx="2" cy="2" r="1.600"/><circle cx="2" cy="7" r="1.600"/><circle cx="2" cy="12" r="1.600"/></g></svg>
    </div>

    <div class="bookmarks">
      <div class="bm"><svg class="fold"><use href="#folder"/></svg>read</div>
      <div class="bm"><svg class="fold"><use href="#folder"/></svg>english</div>
      <div class="bm"><svg class="fold"><use href="#folder"/></svg>js-library</div>
      <div class="bm"><svg class="fold"><use href="#folder"/></svg>JS-doc</div>
      <div class="bm"><b class="do">do</b>JavaScript Pro…</div>
      <div class="bm"><svg><use href="#t-react"/></svg>React lifecycle…</div>
      <div class="bm tight"><svg viewBox="0 0 16 16"><circle cx="8" cy="8" r="8" fill="#e64a10"/><circle cx="8" cy="8" r="3.700" fill="none" stroke="#fff" stroke-width="1.700"/><g fill="#fff" stroke="#e64a10" stroke-width=".6"><circle cx="3.500" cy="8" r="1.500"/><circle cx="10.300" cy="4" r="1.500"/><circle cx="10.300" cy="12" r="1.500"/></g></svg>Ubuntu help</div>
      <div class="bm meet"><svg viewBox="0 0 16 16"><path fill="#0b9a84" d="M8 0a7 7 0 0 1 1 13.800V16Q5 14 3.500 12A7 7 0 0 1 8 0z"/><path fill="#fff" d="M4.500 4.500h5v1.700l2-1.200v4l-2-1.200v1.700h-5z"/></svg>Google Видео…</div>
      <div class="bm"><svg viewBox="0 0 16 16"><path d="M8 8Q5.500 4.500 3.700 4.700a3.300 3.300 0 0 0 0 6.600Q5.500 11.500 8 8t4.300-3.300a3.300 3.300 0 0 1 0 6.600Q10.500 11.500 8 8z" fill="none" stroke="#3f7fd8" stroke-width="2.200"/></svg>Heterogeneo…</div>
      <div class="bm"><svg><use href="#t-translate"/></svg>Google Перев…</div>
      <div class="bm"><svg viewBox="0 0 16 16"><path fill="#111" d="M1 3 6 13l7-4V7z"/><path fill="#22b33a" d="M1 2 10 0l4 8-8 4z"/><path fill="#e8e8e8" d="M1 5 6 14l1-1-5-9z"/><path d="M3 3l8 2" stroke="#9be8a8"/><path fill="#111" d="M8 13h4l-2 3z"/></svg>Бесплатная э…</div>
      <div class="bm"><svg viewBox="0 0 16 16"><path fill="#2438a0" d="M3 8Q8 4 15 8v3q-2 5-6.500 5T3 12z"/><circle cx="8" cy="3" r="2.500" fill="#4a7ad8"/><circle cx="3" cy="6" r="2.500" fill="#9ec0f0"/><path fill="#fff" d="M5 7h4v4H5z"/></svg><span class="wide">http://certific…</span></div>
      <span class="more">»</span>
      <i class="divider"></i>
      <div class="bm"><svg class="fold"><use href="#folder"/></svg>Other bookmarks</div>
    </div>

    <div class="viewport">
      <div class="site">
        <div class="topbar">
          <div class="wrap">
            <span class="city"><svg width="11" height="15" viewBox="0 0 11 15"><path d="M5.500 14Q.800 8.500.800 5.500a4.700 4.700 0 0 1 9.400 0Q10.200 8.500 5.500 14z" fill="none" stroke="#fff" stroke-width="1.300"/><circle cx="5.500" cy="5.500" r="1.700" fill="none" stroke="#fff" stroke-width="1.200"/></svg>Москва</span>
            <span class="m1">Магазины</span>
            <span class="m2">Покупателям<svg width="9" height="6" viewBox="0 0 9 6"><path d="M1 1l3.500 3.500L8 1" fill="none" stroke="#fff" stroke-width="1.500"/></svg></span>
            <span class="m3">Юридическим лицам</span>
            <span class="m4">Клуб DNS</span>
            <span class="phone"><svg width="15" height="15" viewBox="0 0 15 15"><path fill="#fff" d="M.500 3.500 2.500.800 3.500.700 5.500 4.500 4.300 6.300Q6 9.500 8.800 11L10.500 9.700 14.300 11.500V12.800L12 14.500Q8 15 4 10.500 0 6.500.500 3.500z"/></svg><b>8-800-77-07-999</b><em>(с 03:00 до 22:00)</em></span>
          </div>
        </div>
        <div class="header">
          <div class="wrap">
            <div class="logo">
              <svg width="90" height="24" viewBox="0 0 90 24"><path fill="#ff7d00" d="M0 1h19q9 0 9 11t-9 11H0z"/><path fill="#fff" d="M2 13 12.500 5l4 3V6h3v4.500L23 13l-1 1.500-2-1.300V20H6v-6.800l-2.500 1.600z"/><path d="M4 13.500 12.500 7.500l8.500 6" fill="none" stroke="#ff7d00" stroke-width=".8"/><path fill="#ff7d00" d="M10.500 14h2v2h-2zm3 0h2v2h-2zm-3 3h2v2h-2zm3 0h2v2h-2z"/><path d="M33 23V3.500L55 20.500V1" fill="none" stroke="#ff7d00" stroke-width="6"/><path d="M88 4H69q-6 0-6 4t5 4H82q5 0 5 4t-5 4H61" fill="none" stroke="#ff7d00" stroke-width="5.800"/></svg>
              <div class="stay">STAY <b>HOME</b></div>
              <div class="buy">ПОКУПАЙ <b>ИЗ ДОМА</b></div>
            </div>
            <button class="catalog">Каталог товаров<svg width="11" height="8" viewBox="0 0 11 8"><path d="M1 1.500l4.500 5 4.500-5" fill="none" stroke="#fff" stroke-width="1.700"/></svg></button>
            <div class="search"><span>Поиск по сайту</span><svg width="17" height="17" viewBox="0 0 17 17"><circle cx="7.500" cy="7.500" r="6" fill="none" stroke="#8a8a8a" stroke-width="2"/><path d="M11.500 11.500l4.500 4.500" stroke="#8a8a8a" stroke-width="2.300"/></svg></div>
            <span class="act compare"><svg width="15" height="16" viewBox="0 0 15 16"><path d="M1.500 9v7M7.500 1v15M13.500 5v11" stroke="#dcdcdc" stroke-width="1.900"/></svg>Сравнить</span>
            <span class="act fav"><svg width="15" height="14" viewBox="0 0 15 14"><path fill="#d4d4d4" d="M7.500 14Q0 8.500 0 4.500 0 .500 3.700.500 6.500.500 7.500 3 8.500.500 11.300.500 15 .500 15 4.500 15 8.500 7.500 14z"/></svg>Избранное</span>
            <span class="act cart"><svg width="18" height="16" viewBox="0 0 18 16"><path fill="#d4d4d4" d="M0 .500h3.200l.8 1.800H18L15.500 10H6L2.500 2H0zM5.500 11h10v1.300H5z"/><circle cx="7.500" cy="14.200" r="1.600" fill="#d4d4d4"/><circle cx="13.500" cy="14.200" r="1.600" fill="#d4d4d4"/></svg>Корзина</span>
            <svg class="bell" width="16" height="18" viewBox="0 0 16 18"><path fill="#cacaca" d="M8 0q1.300 0 1.300 1.400Q13 2.500 13 7v4.500l2.500 3V15.500H.5V14.500L3 11.500V7Q3 2.500 6.700 1.400 6.700 0 8 0zM6 16.300h4Q9.500 18 8 18T6 16.300z"/></svg>
            <button class="login">Войти</button>
          </div>
        </div>

        <main class="wrap content">
          <div class="heading">
            <h1>Конфигуратор компьютера</h1>
            <div class="links">
              <svg width="12" height="12" viewBox="0 0 12 12"><circle cx="6" cy="6" r="5.300" fill="none" stroke="#c2c2c2" stroke-width="1.200"/><path fill="#b5b5b5" d="M4.500 3.500 8.500 6l-4 2.500z"/></svg>
              <a class="l1">Инструкция по сборке</a><a class="l2">Справка по конфигуратору</a><a class="l3">Обратная связь</a>
            </div>
          </div>
          <section class="intro">Начните работу с конфигуратором, добавьте товар в категорию: "<a>Процессор</a>"</section>
          <div class="subhead">
            <h2>Системный блок</h2>
            <p>Обязательные комплектующие<br>отмечены звездочкой</p>
          </div>
          <section class="parts">
            <div class="row req"><svg class="ok"><use href="#check"/></svg><span class="name">Процессор<sup>*</sup></span><svg class="pic"><use href="#p-cpu"/></svg><div class="bars"><i></i><i></i><i></i><i></i></div><button>+ Добавить</button></div>
            <div class="row req"><svg class="ok"><use href="#check"/></svg><span class="name">Материнская плата<sup>*</sup></span><svg class="pic"><use href="#p-board"/></svg><div class="bars"><i></i><i></i><i></i><i></i></div><button>+ Добавить</button></div>
            <div class="row req"><svg class="ok"><use href="#check"/></svg><span class="name">Корпус<sup>*</sup></span><svg class="pic"><use href="#p-case"/></svg><div class="bars"><i></i><i></i><i></i><i></i></div><button>+ Добавить</button></div>
            <div class="row"><svg class="ok"><use href="#check"/></svg><span class="name">Видеокарта</span><svg class="pic"><use href="#p-gpu"/></svg><div class="bars"><i></i><i></i><i></i><i></i></div><button>+ Добавить</button></div>
            <div class="row req"><svg class="ok"><use href="#check"/></svg><span class="name">Охлаждение процессора<sup>*</sup></span><svg class="pic"><use href="#p-fan"/></svg><div class="bars"><i></i><i></i><i></i><i></i></div><button>+ Развернуть</button></div>
            <div class="row req"><svg class="ok"><use href="#check"/></svg><span class="name">Оперативная память<sup>*</sup></span><svg class="pic"><use href="#p-ram"/></svg><div class="bars"><i></i><i></i><i></i><i></i></div><button>+ Развернуть</button></div>
            <div class="row req"><svg class="ok"><use href="#check"/></svg><span class="name">Хранение данных<sup>*</sup></span><svg class="pic"><use href="#p-hdd"/></svg><div class="bars"><i></i><i></i><i></i><i></i></div><button>+ Развернуть</button></div>
            <div class="row req"><svg class="ok"><use href="#check"/></svg><span class="name">Блок питания<sup>*</sup></span><svg class="pic"><use href="#p-psu"/></svg><div class="bars"><i></i><i></i><i></i><i></i></div><button>+ Добавить</button></div>
            <div class="row"><svg class="ok"></svg><span class="name"></span><svg class="pic"><use href="#p-reader"/></svg><div class="bars"><i></i><i></i><i></i><i></i></div><button></button></div>
          </section>
          <svg class="arrows" width="1180" height="270" viewBox="0 0 1180 270"><g fill="none" stroke="#8c8c8c" stroke-width="1.100"><path d="M863 60C975 66 1047 128 1064 229M1059 224l5.500 6 3.500-7.500"/><path d="M241 216C205 235 172 250 146 251.500M152 247l-6.500 4.500 7 4"/></g></svg>
        </main>
      </div>
      <div class="scrollbar"><svg width="9" height="5" viewBox="0 0 9 5"><path fill="#999" d="M0 5 4.500 0 9 5z"/></svg><i class="thumb"></i></div>
    </div>
  </div>
</div>

<div class="recorder"><svg width="59" height="39" viewBox="0 0 59 39"><rect x="19.500" y="6" width="5.500" height="21" rx="1.500" fill="#fff"/><rect x="28.700" y="6" width="5.500" height="21" rx="1.500" fill="#fff"/><path fill="#4fd163" d="M10 31h33v2H10z"/><path fill="#444" d="M48 38h7l-3.500 3z"/></svg></div>
</body>
</html>
```
FILE: styles.css
```css
* { box-sizing: border-box; }
body { margin: 0; width: 1920px; height: 1080px; overflow: hidden; font-family: "Noto Sans", "Open Sans", sans-serif; color: #333; background: #f5f5f5; }
svg { display: block; flex: none; }
b { font-weight: 700; }
.defs { position: absolute; width: 0; height: 0; }
.sprite { display: none; }
.serif { font-family: "Liberation Serif", serif; }
button { font-family: inherit; padding: 0; }

/* desktop panel */
.panel { height: 24px; display: flex; justify-content: space-between; align-items: center; padding: 0 8px 0 6px; background: linear-gradient(#5f5c50, #57554c 4px, #403f3a); color: #dfdbd2; }
.panel-title { font-size: 15px; font-weight: 700; letter-spacing: -.37px; line-height: 22px; margin-top: -2px; white-space: nowrap; }
.tray { display: flex; align-items: center; }
.tray svg:nth-child(1) { margin-right: 12px; }
.tray svg:nth-child(2) { margin-right: 13px; }
.tray svg:nth-child(3) { margin-right: 12px; }
.tray svg:nth-child(4) { margin-right: 13px; }
.lang { width: 20px; height: 20px; border-radius: 2px; background: #dfdbd2; color: #45443f; font-size: 13px; line-height: 20px; text-align: center; margin-right: 11px; letter-spacing: -.4px; }
.tray svg:nth-child(6) { margin-right: 14px; }
.tray svg:nth-child(7) { margin-right: 12px; }
.tray svg:nth-child(8) { margin-right: 12px; }
.clock { width: 56px; font-size: 15px; letter-spacing: -.37px; line-height: 22px; margin-top: -2px; white-space: nowrap; margin-right: 11px; }

.desktop { display: flex; height: 1056px; }

/* launcher */
.launcher { width: 65px; flex: none; height: 1056px; overflow: hidden; padding: 6px 0 0 6px; display: flex; flex-direction: column; gap: 7px; background: linear-gradient(90deg, #686d6d, #7e8484 3px, #858b8c 60px, #767c7c 63px, #ecebea 64px); box-shadow: inset 0 6px 5px -3px #3b3f40; }
.app { position: relative; width: 52px; height: 52px; flex: none; border-radius: 4px; border: 1px solid #a4a8a8; background: linear-gradient(#a2a6a6, #838888 45%, #8f9494); box-shadow: 0 1px 2px rgba(0,0,0,.45); }
.app > svg { width: 50px; height: 50px; }
.slate { background: linear-gradient(#9aa9ae, #7b8c94); }
.wine { background: linear-gradient(#b8808a, #8c3848 40%, #84303f); border-color: #b0707c; }
.brick { background: linear-gradient(#c67f70, #a94c3c 50%, #b35744); border-color: #c98778; }
.navy { background: linear-gradient(#5b7cc4, #2f55a8 50%, #4169b8); border-color: #6f8ccb; }
.red { background: linear-gradient(#c25656, #a83238); border-color: #cf7a78; }
.run::before { content: ""; position: absolute; left: -7px; top: 20px; border: 5px solid transparent; border-left-color: #ddd; border-right: 0; }
.focus::after { content: ""; position: absolute; right: -7px; top: 20px; border: 5px solid transparent; border-right-color: #ddd; border-left: 0; }
.doc { margin-top: -2px; }
.stack { margin: -8px 0 0 -6px; flex: none; }

/* browser window */
.browser { flex: 1; min-width: 0; display: flex; flex-direction: column; }
.tabs { height: 34px; flex: none; display: flex; padding-left: 14.500px; background: #3c3b37; }
.tab { position: relative; width: 51.930px; flex: none; display: flex; align-items: center; gap: 8px; padding-left: 8px; }
.tab.narrow { width: 51px; }
.tab::after { content: ""; position: absolute; right: 0; top: 7px; height: 20px; width: 1px; background: #73726d; }
.tab.last::after, .tab.active::after { display: none; }
.tab svg { width: 16px; height: 16px; }
.tab span { width: 13px; overflow: hidden; white-space: nowrap; font-size: 14px; line-height: 22px; color: #dedbd4; letter-spacing: -.5px; -webkit-mask: linear-gradient(90deg, #000 65%, rgba(0,0,0,.2)); mask: linear-gradient(90deg, #000 65%, rgba(0,0,0,.2)); }
.tab.active { background: #f2f1f0; border-radius: 8px 8px 0 0; gap: 7px; }
.tab.active::before { content: ""; position: absolute; left: -8px; right: -8px; bottom: 0; height: 8px; background: radial-gradient(circle at 0 0, transparent 8px, #f2f1f0 8.500px) 0 0 / 8px 8px no-repeat, radial-gradient(circle at 100% 0, transparent 8px, #f2f1f0 8.500px) 100% 0 / 8px 8px no-repeat; }
.tab svg.close { width: 9px; height: 9px; }
.tab:nth-last-child(2) span { width: 20px; -webkit-mask: none; mask: none; }
.plus { width: 13px; height: 13px; margin: 11px 0 0 16px; }

.toolbar { height: 35px; flex: none; display: flex; align-items: center; background: #f2f1f0; padding-left: 15px; }
.nav-buttons { width: 93px; display: flex; align-items: center; gap: 18px; padding-bottom: 1px; }
.omnibox { width: 1274px; height: 28px; border-radius: 14px; background: #fff; display: flex; align-items: center; padding: 0 10px 0 14px; }
.url { margin-left: 11px; font-size: 14px; letter-spacing: -.500px; color: #777; flex: 1; line-height: 26px; }
.url b { font-weight: 400; color: #222; }
.omni-actions { display: flex; gap: 16px; }
.extensions { display: flex; gap: 6px; margin-left: 9px; }
.extensions svg { width: 26px; height: 26px; overflow: visible; }
.disc { filter: drop-shadow(0 1px 1px rgba(0,0,0,.35)); }
.divider { width: 1px; height: 16px; background: #cfcdcb; }
.toolbar .divider { margin-left: 9px; }
.avatar { width: 22px; height: 22px; margin-left: 12px; }
.kebab { width: 4px; height: 14px; margin-left: 19px; }

.bookmarks { height: 35px; flex: none; background: #f2f1f0; border-bottom: 1px solid #cfccd0; display: grid; grid-template-columns: 71px 90px 99px 84px 154px 154px 126px 152.500px 154px 154px 154px 258px 19px 12px auto; align-items: center; padding-left: 15px; padding-bottom: 3px; }
.bm { display: flex; align-items: center; gap: 9px; font-size: 15px; letter-spacing: -.15px; line-height: 22px; color: #4d4d4d; white-space: nowrap; }
.bm svg { width: 16px; height: 16px; margin-top: 1px; }
.bm svg.fold { width: 14px; height: 12px; }
.bm.tight { letter-spacing: -.45px; }
.bm.meet { gap: 7px; }
.wide { letter-spacing: .2px; }
.do { width: 15px; color: #f2463f; font-size: 14px; letter-spacing: -.8px; }
.more { font-size: 17px; line-height: 20px; font-weight: 700; color: #555; }

.viewport { flex: 1; min-height: 0; display: flex; }
.site { width: 1840px; flex: none; height: 952px; overflow: hidden; background: #f5f5f5; }
.scrollbar { flex: 1; background: #f1f1f1; padding: 6px 2px 0; display: flex; flex-direction: column; align-items: center; }
.thumb { width: 11px; height: 375px; margin-top: 4px; background: #c1c1c1; }

/* shop */
.wrap { width: 1180px; margin-left: 330px; position: relative; }
.topbar { height: 33px; background: #ff8200; color: #fff; font-size: 13px; letter-spacing: -.38px; line-height: 32px; }
.topbar .wrap { display: grid; grid-template-columns: 279.500px 75.500px 107.500px 143.500px 247px 1fr; white-space: nowrap; }
.topbar span { display: flex; align-items: center; }
.city { padding-left: 1px; gap: 7px; }
.m2 svg { margin-left: 2px; }
.m4 { letter-spacing: -.15px; }
.phone { padding-left: 88px; }
.phone b { letter-spacing: .5px; margin: 0 6px 0 5px; }
.phone em { font-style: normal; letter-spacing: 0; }
.topbar .phone { margin-right: -20px; }

.header { position: relative; height: 64px; background: #fff; box-shadow: 0 0 36px rgba(0,0,0,.19); clip-path: inset(0 0 -50px 0); }
.header .wrap { display: flex; align-items: flex-start; padding-top: 8px; white-space: nowrap; }
.logo { width: 110px; }
.stay { font-family: Lato, sans-serif; font-size: 15px; line-height: 14px; color: #111; letter-spacing: -.9px; padding-left: 7px; }
.buy { font-family: Lato, sans-serif; font-size: 10.500px; line-height: 11px; color: #ff7d00; letter-spacing: -1.050px; }
.stay b, .buy b { font-weight: 900; }
.catalog { width: 170px; height: 40px; margin-top: 4px; border: 0; border-radius: 7px; background: linear-gradient(#ffa300, #ff7b00); color: #fff; font-size: 14px; font-weight: 700; letter-spacing: -.250px; display: flex; align-items: center; padding-left: 19px; gap: 6px; }
.catalog svg { margin-top: 4px; }
.search { width: 410px; height: 40px; margin: 4px 0 0 20px; border-radius: 8px; background: #e8e8e8; display: flex; align-items: center; justify-content: space-between; padding: 0 15px 0 12px; font-size: 15px; letter-spacing: -.290px; color: #777; }
.act { display: flex; align-items: center; height: 40px; margin-top: 7px; font-size: 14px; letter-spacing: -.450px; color: #333; }
.act svg { margin-top: -2px; }
.compare { width: 108px; margin-left: 24px; gap: 11px; }
.fav { width: 119px; gap: 9px; }
.cart { width: 113px; gap: 10px; }
.bell { margin-top: 17px; }
.login { width: 68px; height: 41px; margin: 3px 0 0 22px; border: 1px solid #d4d4d4; border-radius: 9px; background: #fff; color: #333; font-size: 14px; }

.content { height: 855px; }
.heading { height: 79px; padding-top: 33px; display: flex; justify-content: space-between; }
h1, h2 { margin: 0; font-weight: 400; line-height: 40px; white-space: nowrap; color: #333; }
h1 { font-size: 26px; letter-spacing: -.700px; line-height: 39px; }
.links { display: flex; align-items: flex-start; padding: 17px 1px 0 0; font-size: 13px; letter-spacing: -.230px; white-space: nowrap; }
.links svg { margin: 3px 3px 0 0; }
a { color: #1a84dc; border-bottom: 1px dotted #1a84dc; }
.links a { line-height: 17px; height: 19px; }
.l2, .l3 { margin-left: 32px; }
.intro { height: 120px; border: 1px solid #ddd; border-radius: 4px; background: #fff; text-align: center; font-size: 15px; letter-spacing: -.390px; line-height: 119px; }
.intro a { display: inline-block; line-height: 20px; }
.subhead { height: 104px; padding-top: 47px; display: flex; }
h2 { width: 241px; font-size: 28px; letter-spacing: -.950px; }
.subhead p { margin: 9px 0 0; font-size: 15px; letter-spacing: -.500px; line-height: 22px; white-space: nowrap; }
.parts { padding-top: 1px; background: #fff; border-radius: 8px; box-shadow: 0 0 2px rgba(0,0,0,.15); }
.row { height: 66px; margin: 0 1px; border-bottom: 1px solid #dcdcdc; display: grid; grid-template-columns: 31px 219px 71px 645px 155px; padding-left: 20px; align-items: start; }
.ok { width: 16px; height: 16px; margin-top: 25px; }
.pic { width: 45px; height: 45px; margin-top: 9px; }
.name { font-size: 15px; letter-spacing: -.430px; line-height: 22px; padding-top: 22px; white-space: nowrap; }
.req .name { padding-top: 24px; }
.name sup { font-size: 15px; font-weight: 700; line-height: 0; margin-left: 6px; vertical-align: 6px; }
.bars { padding-top: 15px; display: grid; gap: 5px; }
.bars i { height: 5px; width: 314px; background: #ededed; }
.bars i:nth-child(odd) { width: 428px; }
.row button { height: 35px; margin-top: 15px; border: 1px solid #d9d9d9; border-bottom-width: 2px; border-radius: 4px; background: #fff; color: #333; font-size: 15px; letter-spacing: -.380px; line-height: 30px; padding-top: 2px; }
.arrows { position: absolute; left: 0; top: 79px; }

.recorder { position: absolute; left: 1861px; top: 1032px; width: 59px; height: 39px; border: 1px solid #9a9a9a; border-right: 0; border-radius: 4px 0 0 4px; background: #636363; }
.recorder svg { margin: -1px; overflow: visible; }
```
